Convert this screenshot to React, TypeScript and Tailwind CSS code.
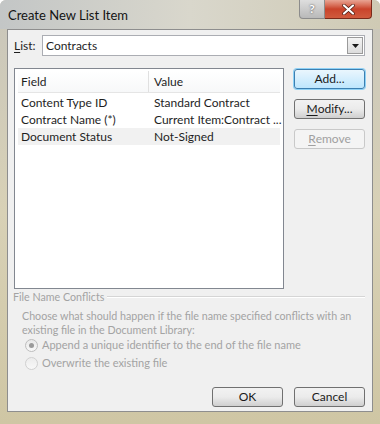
import React from "react";

const rows = [
  { field: "Content Type ID", value: "Standard Contract" },
  { field: "Contract Name (*)", value: "Current Item:Contract ..." },
  { field: "Document Status", value: "Not-Signed", selected: true },
];

function Btn({
  children,
  focused,
  disabled,
  className = "",
}: {
  children: React.ReactNode;
  focused?: boolean;
  disabled?: boolean;
  className?: string;
}) {
  return (
    <div
      className={
        "h-[20px] w-[71px] rounded-[3px] border flex items-center justify-center " +
        (disabled
          ? "border-[#c9c9c9] bg-[#f4f4f4] text-[#a0a0a0] "
          : focused
          ? "border-[#3c7fb1] bg-gradient-to-b from-[#eaf6fd] to-[#bee6fd] text-[#1a1a1a] shadow-[0_0_0_1px_#8fd1f5] "
          : "border-[#707070] bg-gradient-to-b from-[#f2f2f2] via-[#ebebeb] to-[#cfcfcf] text-[#1a1a1a] ") +
        className
      }
    >
      {children}
    </div>
  );
}

export default function App() {
  return (
    <div
      className="w-[380px] h-[424px] flex flex-col bg-gradient-to-b from-[#c9c6bb] via-[#d8d1b6] to-[#cfc6a4] rounded-t-[6px] overflow-hidden"
      style={{ fontFamily: 'Lato, "Noto Sans", sans-serif' }}
    >
      {/* title bar */}
      <div className="h-[29px] flex items-start relative bg-gradient-to-r from-[#c3c6c6] via-[#d9d7cc] to-[#cfcab4]">
        <div className="pl-[8px] pt-[6px] text-[13px] text-[#141414]">Create New List Item</div>
        <div className="ml-auto mr-[8px] flex h-[19px]">
          <div className="w-[26px] h-[19px] rounded-bl-[4px] border border-t-0 border-[#8c8c8c] bg-gradient-to-b from-[#dedede] to-[#b9b9b9] flex items-center justify-center text-[12px] font-bold text-white [text-shadow:0_0_2px_#333]">
            ?
          </div>
          <div className="w-[47px] h-[19px] rounded-br-[4px] border border-t-0 border-l-0 border-[#7a2a1a] bg-gradient-to-b from-[#e8a493] via-[#c9432b] to-[#d05a3d] flex items-center justify-center">
            <svg width="13" height="11" viewBox="0 0 13 11">
              <path d="M2 1.5 L11 9.5 M11 1.5 L2 9.5" stroke="#4a1a10" strokeWidth="3.6" strokeLinecap="round" />
              <path d="M2 1.5 L11 9.5 M11 1.5 L2 9.5" stroke="#ffffff" strokeWidth="2.2" strokeLinecap="round" />
            </svg>
          </div>
        </div>
      </div>

      {/* client area */}
      <div className="ml-[7px] mr-[7px] h-[383px] border border-[#8e8e8e] bg-[#f0f0f0] flex flex-col text-[12px] text-[#1e1e1e]">
        {/* list row */}
        <div className="flex items-center pt-[5px] pl-[6px] pr-[7px]">
          <div className="w-[28px]">
            <span className="underline underline-offset-2">L</span>ist:
          </div>
          <div className="flex-1 h-[21px] border border-[#abadb3] bg-white flex items-center">
            <div className="flex-1 pl-[3px]">Contracts</div>
            <div className="w-[16px] h-[17px] mr-[1px] border border-[#9a9a9a] bg-gradient-to-b from-[#f4f4f4] to-[#dcdcdc] flex items-center justify-center">
              <svg width="7" height="4" viewBox="0 0 7 4">
                <path d="M0 0 H7 L3.5 4 Z" fill="#1a1a1a" />
              </svg>
            </div>
          </div>
        </div>

        {/* list view + buttons */}
        <div className="flex pl-[6px] pr-[7px] mt-[12px]">
          <div className="w-[270px] h-[221px] border border-[#828790] bg-white flex flex-col pt-[2px] px-[3px]">
            <div className="h-[22px] flex items-center border-b border-[#e5e5e5] bg-gradient-to-b from-white to-[#f7f8f9]">
              <div className="w-[131px] shrink-0 pl-[3px] border-r border-[#e0e0e0] h-full flex items-center">Field</div>
              <div className="pl-[5px]">Value</div>
            </div>
            <div className="pt-[1px]">
              {rows.map((r) => (
                <div
                  key={r.field}
                  className={"h-[17px] flex items-center " + (r.selected ? "bg-[#f1f1f1]" : "")}
                >
                  <div className="w-[131px] shrink-0 pl-[3px] whitespace-nowrap">{r.field}</div>
                  <div className="pl-[5px] whitespace-nowrap">{r.value}</div>
                </div>
              ))}
            </div>
          </div>
          <div className="ml-auto flex flex-col pt-[1px] gap-[10px]">
            <Btn focused>Add...</Btn>
            <Btn>
              <span className="underline underline-offset-2">M</span>odify...
            </Btn>
            <Btn disabled>
              <span className="underline underline-offset-2">R</span>emove
            </Btn>
          </div>
        </div>

        {/* group */}
        <div className="text-[10.7px] text-[#a3a3a3]">
          <div className="flex items-center pl-[5px] pr-[7px] mt-[1px] h-[14px]">
            <span>File Name Conflicts</span>
            <div className="flex-1 ml-[3px] h-[2px] border-t border-[#d5d5d5] border-b border-b-white" />
          </div>
          <div className="pl-[14px] pr-[4px] mt-[5px] leading-[14px]">
            Choose what should happen if the file name specified conflicts with an existing file in the Document Library:
          </div>
          <div className="pl-[17px] mt-[1px] flex flex-col gap-[4px] text-[11px]">
            <div className="flex items-center h-[14px]">
              <div className="w-[13px] h-[13px] rounded-full border border-[#bdbdbd] bg-gradient-to-b from-[#e8e8e8] to-[#f8f8f8] flex items-center justify-center">
                <div className="w-[5px] h-[5px] rounded-full bg-[#9a9a9a]" />
              </div>
              <span className="ml-[4px]">Append a unique identifier to the end of the file name</span>
            </div>
            <div className="flex items-center h-[14px]">
              <div className="w-[13px] h-[13px] rounded-full border border-[#d0d0d0] bg-gradient-to-b from-[#ececec] to-[#f8f8f8]" />
              <span className="ml-[4px]">Overwrite the existing file</span>
            </div>
          </div>
        </div>

        <div className="mt-auto mb-[4px] flex justify-end gap-[11px] pr-[7px]">
          <Btn>OK</Btn>
          <Btn>Cancel</Btn>
        </div>
      </div>
      <div className="flex-1" />
    </div>
  );
}
